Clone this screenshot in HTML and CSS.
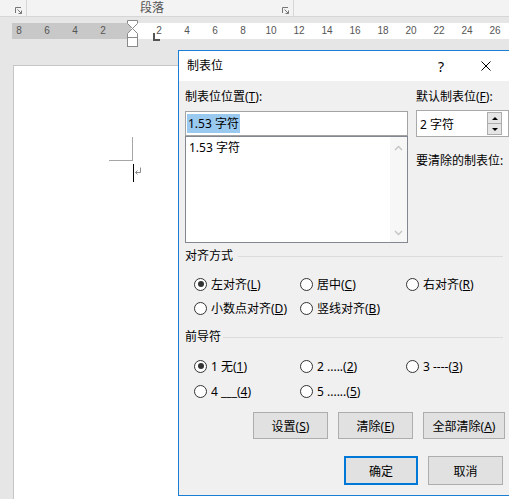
FILE: index.html
```html
<!DOCTYPE html>
<html lang="zh-CN">
<head>
    <meta charset="UTF-8">
    <meta name="viewport" content="width=device-width, initial-scale=1.0">
    <title>制表位</title>
    <link rel="stylesheet" href="styles.css">
</head>
<body>
    <!-- ribbon strip (bottom of the 段落 group) -->
    <div class="ribbon">
        <div class="ribbon-group left-end">
            <svg class="launcher" width="7" height="7" viewBox="0 0 7 7">
                <path d="M0.5 6V0.5H6" fill="none" stroke="#777"/>
                <path d="M2.5 2.5L6.5 6.5M6.5 3.5V6.5H3.5" fill="none" stroke="#777"/>
            </svg>
        </div>
        <div class="ribbon-group para">
            <span class="group-name">段落</span>
            <svg class="launcher" width="7" height="7" viewBox="0 0 7 7">
                <path d="M0.5 6V0.5H6" fill="none" stroke="#777"/>
                <path d="M2.5 2.5L6.5 6.5M6.5 3.5V6.5H3.5" fill="none" stroke="#777"/>
            </svg>
        </div>
    </div>

    <!-- horizontal ruler -->
    <div class="ruler-strip">
        <div class="ruler">
            <div class="ruler-margin">
                <span>8</span><span>6</span><span>4</span><span>2</span>
            </div>
            <div class="ruler-text">
                <span>2</span><span>4</span><span>6</span><span>8</span><span>10</span>
                <span>12</span><span>14</span><span>16</span><span>18</span><span>20</span>
                <span>22</span><span>24</span><span>26</span>
            </div>
            <svg class="indent-marker" width="12" height="28" viewBox="0 0 12 28">
                <path d="M0.5 0.5H10.5V3.5L5.5 8.5L0.5 3.5Z" fill="#fff" stroke="#8a8a8a"/>
                <path d="M5.5 8.5L10.5 13.5V17.5H0.5V13.5Z" fill="#fff" stroke="#8a8a8a"/>
                <rect x="0.5" y="17.5" width="10" height="9" fill="#fff" stroke="#8a8a8a"/>
            </svg>
            <div class="tab-marker"></div>
        </div>
    </div>

    <!-- document page -->
    <div class="workspace">
        <div class="page">
            <div class="corner-mark"></div>
            <div class="first-line">
                <span class="caret"></span>
                <svg class="para-mark" width="8" height="9" viewBox="0 0 8 9">
                    <path d="M6.5 0.5V5.5H1.5" fill="none" stroke="#8c8c8c"/>
                    <path d="M3.5 3.5L1.5 5.5L3.5 7.5" fill="none" stroke="#8c8c8c"/>
                </svg>
            </div>
        </div>
    </div>

    <!-- 制表位 dialog -->
    <div class="dialog">
        <div class="title-bar">
            <span class="title">制表位</span>
            <span class="help">?</span>
            <svg class="close" width="10" height="10" viewBox="0 0 10 10">
                <path d="M0.5 0.5L9.5 9.5M9.5 0.5L0.5 9.5" stroke="#000" stroke-width="1"/>
            </svg>
        </div>

        <div class="client">
            <div class="top-row">
                <div class="pos-col">
                    <div class="label">制表位位置(<u>T</u>):</div>
                    <div class="text-input"><span class="selected">1.53 字符</span></div>
                    <div class="list-box">
                        <div class="list-items">
                            <div class="list-item">1.53 字符</div>
                        </div>
                        <div class="scroll">
                            <svg width="9" height="6" viewBox="0 0 9 6"><path d="M1 5L4.5 1.5L8 5" fill="none" stroke="#c4c4c4" stroke-width="1.4"/></svg>
                            <svg width="9" height="6" viewBox="0 0 9 6"><path d="M1 1L4.5 4.5L8 1" fill="none" stroke="#c4c4c4" stroke-width="1.4"/></svg>
                        </div>
                    </div>
                </div>
                <div class="default-col">
                    <div class="label">默认制表位(<u>F</u>):</div>
                    <div class="spin-box">
                        <span>2 字符</span>
                        <div class="spin-buttons">
                            <span class="spin"><i class="tri-up"></i></span>
                            <span class="spin down"><i class="tri-down"></i></span>
                        </div>
                    </div>
                    <div class="label clear-label">要清除的制表位:</div>
                </div>
            </div>

            <div class="group-title">对齐方式</div>
            <div class="radio-grid">
                <label class="radio checked"><span class="dot"></span><span>左对齐(<u>L</u>)</span></label>
                <label class="radio"><span class="dot"></span><span>居中(<u>C</u>)</span></label>
                <label class="radio"><span class="dot"></span><span>右对齐(<u>R</u>)</span></label>
                <label class="radio"><span class="dot"></span><span>小数点对齐(<u>D</u>)</span></label>
                <label class="radio"><span class="dot"></span><span>竖线对齐(<u>B</u>)</span></label>
            </div>

            <div class="group-title lead">前导符</div>
            <div class="radio-grid leaders">
                <label class="radio checked"><span class="dot"></span><span>1 无(<u>1</u>)</span></label>
                <label class="radio"><span class="dot"></span><span>2 .....(<u>2</u>)</span></label>
                <label class="radio"><span class="dot"></span><span>3 ----(<u>3</u>)</span></label>
                <label class="radio"><span class="dot"></span><span>4 ___(<u>4</u>)</span></label>
                <label class="radio"><span class="dot"></span><span>5 ......(<u>5</u>)</span></label>
            </div>

            <div class="button-row">
                <button class="btn">设置(<u>S</u>)</button>
                <button class="btn">清除(<u>E</u>)</button>
                <button class="btn wide">全部清除(<u>A</u>)</button>
            </div>

            <div class="button-row actions">
                <button class="btn ok">确定</button>
                <button class="btn cancel">取消</button>
            </div>
        </div>
    </div>
</body>
</html>
```

FILE: styles.css
```css
* {
    box-sizing: border-box;
}

html, body {
    margin: 0;
}

body {
    position: relative;
    width: 509px;
    height: 499px;
    overflow: hidden;
    background: #e6e6e6;
    font-family: "Noto Sans", "Noto Sans CJK SC", sans-serif;
    font-size: 12px;
    color: #000;
}

/* ribbon */
.ribbon {
    display: flex;
    height: 17px;
    background: #f3f3f3;
    border-bottom: 1px solid #d6d6d6;
}

.ribbon-group {
    display: flex;
    align-items: flex-start;
    height: 16px;
    border-right: 1px solid #d6d6d6;
}

.left-end {
    width: 27px;
}

.left-end .launcher {
    margin: 7px 0 0 15px;
}

.para {
    width: 267px;
    padding-left: 113px;
}

.group-name {
    padding-top: 1px;
    color: #555;
    line-height: 13px;
}

.launcher {
    flex: none;
    margin: 7px 4px 0 auto;
}

/* ruler */
.ruler-strip {
    height: 48px;
    padding: 6px 0 0 12px;
}

.ruler {
    position: relative;
    display: flex;
    height: 16px;
}

.ruler-margin {
    display: flex;
    justify-content: flex-end;
    width: 120px;
    padding-right: 14px;
    background: #c8c8c8;
    overflow: hidden;
}

.ruler-text {
    display: flex;
    flex: 1;
    padding-left: 14px;
    background: #fff;
}

.ruler span {
    flex: none;
    width: 28px;
    text-align: center;
    font: 10px/16px "Liberation Sans", sans-serif;
    color: #555;
}

.indent-marker {
    position: absolute;
    left: 115px;
    top: -3px;
}

.tab-marker {
    position: absolute;
    left: 141px;
    top: 10px;
    width: 7px;
    height: 8px;
    border-left: 2px solid #555;
    border-bottom: 2px solid #555;
}

/* document */
.workspace {
    height: 434px;
    padding-left: 13px;
}

.page {
    height: 100%;
    background: #fff;
    border-left: 1px solid #c6c6c6;
    border-top: 1px solid #c6c6c6;
}

.corner-mark {
    width: 24px;
    height: 24px;
    margin: 71px 0 0 95px;
    border-right: 1px solid #a6a6a6;
    border-bottom: 1px solid #a6a6a6;
}

.first-line {
    display: flex;
    margin: 3px 0 0 119px;
}

.caret {
    width: 1px;
    height: 18px;
    background: #000;
}

.para-mark {
    margin-top: 3px;
}

/* dialog */
.dialog {
    position: absolute;
    left: 178px;
    top: 50px;
    width: 340px;
    height: 446px;
    background: #f0f0f0;
    border: 1px solid #1a7fd4;
}

.title-bar {
    display: flex;
    align-items: center;
    height: 30px;
    padding-left: 8px;
    background: #fff;
}

.title {
    line-height: 30px;
}

.help {
    width: 12px;
    margin-left: auto;
    text-align: center;
    font-size: 14px;
}

.close {
    margin: 0 26px 0 34px;
}

.client {
    padding: 8px 0 0 6px;
}

.top-row {
    display: flex;
}

.pos-col {
    width: 223px;
}

.default-col {
    width: 93px;
    margin-left: 8px;
}

.label {
    height: 16px;
    line-height: 16px;
    white-space: nowrap;
}

.text-input {
    height: 25px;
    margin-top: 6px;
    padding: 2px 0 0 1px;
    background: #fff;
    border: 1px solid #a3a3a3;
}

.selected {
    display: inline-block;
    padding: 0 1px;
    line-height: 19px;
    background: #99c9ef;
}

.list-box {
    display: flex;
    height: 107px;
    background: #fff;
    border: 1px solid #828790;
}

.list-items {
    flex: 1;
    padding: 3px 0 0 3px;
}

.list-item {
    line-height: 16px;
}

.scroll {
    display: flex;
    flex-direction: column;
    justify-content: space-between;
    align-items: center;
    width: 17px;
    padding: 8px 0 6px;
    background: #f7f7f7;
}

.spin-box {
    display: flex;
    align-items: center;
    height: 27px;
    margin-top: 5px;
    padding-left: 3px;
    background: #fff;
    border: 1px solid #a9a9a9;
}

.spin-buttons {
    display: flex;
    flex-direction: column;
    width: 15px;
    height: 23px;
    margin: 0 6px 0 auto;
}

.spin {
    display: flex;
    flex: 1;
    align-items: center;
    justify-content: center;
    background: #e5e5e5;
    border: 1px solid #acacac;
}

.spin.down {
    border-top: none;
}

.tri-up, .tri-down {
    width: 0;
    height: 0;
    border-left: 3px solid transparent;
    border-right: 3px solid transparent;
}

.tri-up {
    border-bottom: 3px solid #000;
}

.tri-down {
    border-top: 3px solid #000;
}

.clear-label {
    margin-top: 16px;
}

.group-title {
    display: flex;
    align-items: center;
    margin-top: 5px;
    line-height: 16px;
}

.group-title::after {
    content: "";
    flex: 1;
    margin: 0 14px 0 5px;
    border-top: 1px solid #dcdcdc;
}

.group-title.lead {
    margin-top: 9px;
}

.group-title.lead::after {
    margin-left: 2px;
}

.radio-grid {
    display: grid;
    grid-template-columns: 106px 106px 1fr;
    grid-auto-rows: 24px;
    margin-top: 8px;
    padding-left: 9px;
}

.radio-grid.leaders {
    margin-top: 9px;
    row-gap: 1px;
}

.radio {
    display: flex;
    align-items: center;
    white-space: nowrap;
}

.dot {
    display: flex;
    align-items: center;
    justify-content: center;
    flex: none;
    width: 13px;
    height: 13px;
    margin-right: 4px;
    background: #fff;
    border: 1px solid #333;
    border-radius: 50%;
}

.checked .dot::after {
    content: "";
    width: 6px;
    height: 6px;
    background: #333;
    border-radius: 50%;
}

.button-row {
    display: flex;
    gap: 10px;
    margin-top: 9px;
    padding-left: 68px;
}

.btn {
    width: 75px;
    height: 27px;
    padding: 0;
    font-family: inherit;
    font-size: 12px;
    color: #000;
    background: #e1e1e1;
    border: 1px solid #adadad;
}

.btn.wide {
    width: 82px;
}

.actions {
    margin-top: 17px;
    padding-left: 159px;
}

.btn.ok {
    width: 74px;
    height: 29px;
    border: 2px solid #0078d7;
}

.btn.cancel {
    height: 29px;
}
```
